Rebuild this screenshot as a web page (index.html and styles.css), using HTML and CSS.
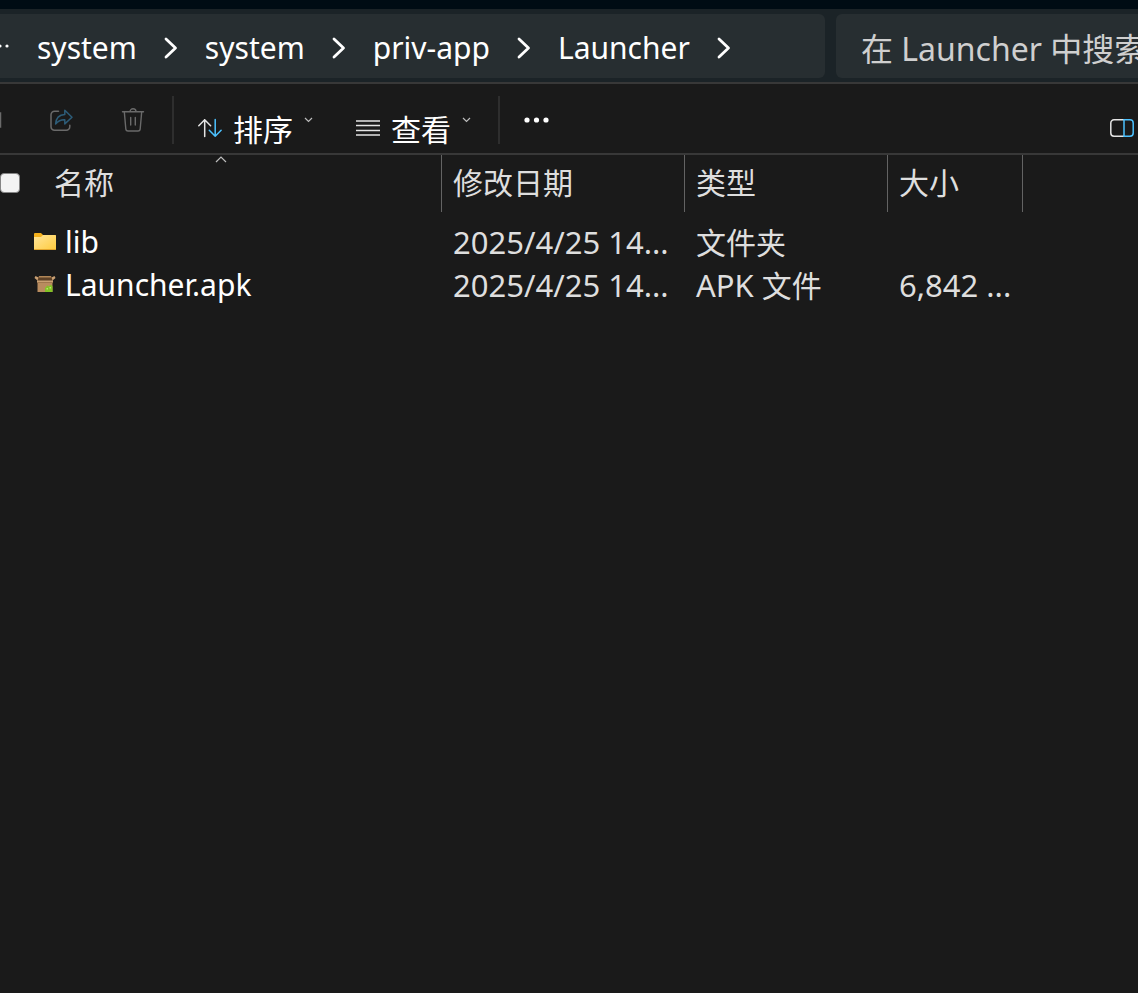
FILE: index.html
```html
<!DOCTYPE html>
<html lang="zh-CN">
<head>
<meta charset="utf-8">
<title>Launcher</title>
<link rel="stylesheet" href="styles.css">
</head>
<body>
<div class="window">
  <header class="address-row">
    <nav class="breadcrumb" aria-label="路径">
      <button class="overflow" aria-label="更多路径"><svg width="10" height="4" viewBox="0 0 10 4" fill="#fff"><circle cx="0" cy="2" r="1.600"/><circle cx="7" cy="2" r="1.600"/></svg></button>
      <a href="#system">system</a>
      <svg class="crumb-arrow" width="14" height="22" viewBox="0 0 14 22"><path d="M2 2l9.500 9L2 20"/></svg>
      <a href="#system2">system</a>
      <svg class="crumb-arrow" width="14" height="22" viewBox="0 0 14 22"><path d="M2 2l9.500 9L2 20"/></svg>
      <a href="#priv-app">priv-app</a>
      <svg class="crumb-arrow" width="14" height="22" viewBox="0 0 14 22"><path d="M2 2l9.500 9L2 20"/></svg>
      <a href="#launcher">Launcher</a>
      <svg class="crumb-arrow" width="14" height="22" viewBox="0 0 14 22"><path d="M2 2l9.500 9L2 20"/></svg>
    </nav>
    <input class="search" type="text" aria-label="搜索" placeholder="在 Launcher 中搜索">
  </header>

  <div class="toolbar">
    <button class="tool edge" aria-label="重命名"><svg width="2" height="16" viewBox="0 0 2 16"><path d="M0 1h.5v14H0" fill="none" stroke="#6a6a6a" stroke-width="1.500"/></svg></button>
    <button class="tool share" aria-label="共享" disabled>
      <svg width="24" height="24" viewBox="0 0 24 24" fill="none" stroke-width="1.500" stroke-linejoin="round" stroke-linecap="round">
        <path stroke="#6a6a6a" d="M9.500 3.200H5.500A3.500 3.500 0 0 0 2 6.700v12A3.500 3.500 0 0 0 5.500 22.200h11.800a3.500 3.500 0 0 0 3.500-3.500v-1.500"/>
        <path stroke="#2d5c78" d="M15.800 2.200l7.200 7-7.200 6.700v-4.100c-4.200-.2-6.600 1.200-9.200 4.200.3-5.700 3.700-9.300 9.200-9.600z"/>
      </svg>
    </button>
    <button class="tool trash" aria-label="删除" disabled>
      <svg width="24" height="24" viewBox="0 0 24 24" fill="none" stroke="#6a6a6a" stroke-width="1.400" stroke-linecap="round" stroke-linejoin="round">
        <path d="M1.500 3.800h21M9 3.800a3 3 0 0 1 6 0M3.300 3.800l1.500 17a2.300 2.300 0 0 0 2.300 2.200h9.800a2.300 2.300 0 0 0 2.300-2.200l1.500-17M9.700 9.500v7.500M14.300 9.500v7.500"/>
      </svg>
    </button>
    <span class="divider"></span>
    <button class="menu sort">
      <svg width="24" height="20" viewBox="0 0 24 20" fill="none" stroke-width="1.500" stroke-linecap="round" stroke-linejoin="round">
        <path stroke="#e4e4e4" d="M6.700 18.500V1.800M.8 7.800l5.900-6 5.900 6"/>
        <path stroke="#4cc2ff" d="M17.200 1.500v16.700M11.300 12.200l5.900 6 5.900-6"/>
      </svg>
      <span class="label">排序</span>
      <svg class="caret" width="9" height="6" viewBox="0 0 9 6"><path d="M1 1l3.500 3.500L8 1"/></svg>
    </button>
    <button class="menu view">
      <svg width="24" height="18" viewBox="0 0 24 18" stroke="#e4e4e4" stroke-width="1.500"><path d="M0 2h24M0 6.500h24M0 11.500h24M0 16h24"/></svg>
      <span class="label">查看</span>
      <svg class="caret" width="9" height="6" viewBox="0 0 9 6"><path d="M1 1l3.500 3.500L8 1"/></svg>
    </button>
    <span class="divider"></span>
    <button class="tool more" aria-label="更多"><svg width="26" height="6" viewBox="0 0 26 6" fill="#fff"><circle cx="3" cy="3" r="2.600"/><circle cx="12.500" cy="3" r="2.600"/><circle cx="22" cy="3" r="2.600"/></svg></button>
    <button class="tool pane" aria-label="详细信息">
      <svg width="24" height="18" viewBox="0 0 24 18" fill="none" stroke-width="1.500">
        <path stroke="#e4e4e4" d="M14 .8H4A3.200 3.200 0 0 0 .8 4v10A3.200 3.200 0 0 0 4 17.200h10"/>
        <path stroke="#4cc2ff" d="M14 .8h6A3.200 3.200 0 0 1 23.200 4v10a3.200 3.200 0 0 1-3.200 3.200h-6z"/>
      </svg>
    </button>
  </div>

  <table class="files">
    <colgroup><col class="c-name"><col class="c-date"><col class="c-type"><col class="c-size"><col></colgroup>
    <thead>
      <tr>
        <th scope="col">
          <div class="name-head">
            <input type="checkbox" class="check" aria-label="全选">
            <span>名称</span>
            <svg class="sorted" width="12" height="7" viewBox="0 0 12 7"><path d="M1 6l5-5 5 5"/></svg>
          </div>
        </th>
        <th scope="col">修改日期</th>
        <th scope="col">类型</th>
        <th scope="col">大小</th>
        <td></td>
      </tr>
    </thead>
    <tbody>
      <tr>
        <td>
          <div class="file">
            <svg width="22" height="20" viewBox="0 0 22 20">
              <defs><linearGradient id="fold" x1="0" y1="0" x2="1" y2="1"><stop offset="0" stop-color="#ffe59a"/><stop offset="1" stop-color="#ffcb3d"/></linearGradient></defs>
              <path fill="#f5b11c" d="M0 2q0-1 1-1h6l2 2h12q1 0 1 1v4H0z"/>
              <path fill="url(#fold)" d="M0 5h7l2-2h12q1 0 1 1v13q0 1-1 1H1q-1 0-1-1z"/>
              <path fill="#e3a52b" d="M0 17h22q0 1-1 1H1q-1 0-1-1z"/>
            </svg>
            <span>lib</span>
          </div>
        </td>
        <td>2025/4/25 14...</td>
        <td><span class="han">文件夹</span></td>
        <td></td>
        <td></td>
      </tr>
      <tr>
        <td>
          <div class="file">
            <svg width="22" height="20" viewBox="0 0 22 20">
              <path fill="#5d4127" d="M4 1.500h14l1 4.500H3z"/>
              <path fill="#b08657" d="M5 1h12v1.500H5z"/>
              <path fill="#c9a073" d="M4.500 2.500L1.500 1 .5 3l3 2.500zM17.500 2.500l3-1.500 1 2-3 2.500zM3 5.500h16v2H3z"/>
              <path fill="#b98c5f" d="M3.500 7h15v10h-15z"/>
              <path fill="#a0774e" d="M3.500 7h15v1h-15z"/>
              <path fill="#83c225" d="M11 13l2.500-2.500 1.500 1 2-2 1.500 2V17H11z"/>
              <path fill="#b9e86c" d="M12.500 13H14v1.500h-1.500zM15.500 12H17v1.500h-1.500z"/>
            </svg>
            <span>Launcher.apk</span>
          </div>
        </td>
        <td>2025/4/25 14...</td>
        <td>APK <span class="han">文件</span></td>
        <td>6,842 ...</td>
        <td></td>
      </tr>
    </tbody>
  </table>
</div>
</body>
</html>
```
FILE: styles.css
```css
* {
  box-sizing: border-box;
}

body {
  margin: 0;
  background: #1a1a1a;
  color: #dedede;
  font-family: "Noto Sans", "Noto Sans CJK SC", sans-serif;
  font-size: 31px;
}

svg {
  display: block;
  flex: none;
}

button {
  display: flex;
  align-items: center;
  padding: 0;
  border: 0;
  background: none;
  color: #fff;
  font: inherit;
}

.window {
  min-height: 100vh;
  overflow: hidden;
  border-top: 9px solid #000c14;
}

.address-row {
  display: grid;
  grid-template-columns: 825fr 302fr;
  gap: 11px;
  padding: 5px 0 4px;
  background: #1b2327;
  border-bottom: 2px solid #383838;
}

.breadcrumb {
  display: flex;
  align-items: center;
  gap: 27px;
  height: 64px;
  min-width: 0;
  padding-top: 4px;
  background: #272e31;
  border-radius: 0 6px 6px 0;
  font-size: 30px;
}

.breadcrumb a {
  color: #fff;
  line-height: 40px;
  text-decoration: none;
  white-space: nowrap;
}

.crumb-arrow {
  fill: none;
  stroke: #fff;
  stroke-width: 2.8;
  stroke-linecap: round;
  stroke-linejoin: round;
}

.overflow {
  padding-bottom: 5px;
}

.search {
  width: 100%;
  min-width: 0;
  height: 64px;
  padding: 4px 0 0 25px;
  border: 0;
  border-radius: 6px 0 0 6px;
  background: #272e31;
  color: #fff;
  font: inherit;
  font-size: 32px;
}

.search::placeholder {
  color: #cfcfcf;
  opacity: 1;
}

.toolbar {
  display: flex;
  align-items: center;
  height: 71px;
  padding: 2px 4px 0 0;
  border-bottom: 2px solid #383838;
  font-size: 30px;
}

.share {
  margin-left: 47px;
}

.trash {
  margin-left: 48px;
}

.divider {
  width: 2px;
  height: 48px;
  margin-left: 27px;
  background: #2e2e2e;
}

.menu {
  gap: 11px;
  padding-top: 16px;
  line-height: 30px;
}

.label {
  padding-top: 4px;
}

.sort {
  margin-left: 24px;
}

.view {
  margin-left: 43px;
}

.caret {
  align-self: flex-start;
  margin-top: 6px;
}

.caret path,
.sorted path {
  fill: none;
  stroke: #bdbdbd;
  stroke-width: 1.2;
}

.more {
  margin-left: 24px;
}

.pane {
  margin-left: auto;
  padding-top: 16px;
}

.files {
  width: 100%;
  table-layout: fixed;
  border-collapse: separate;
  border-spacing: 0;
}

.c-name {
  width: 442px;
}

.c-date {
  width: 243px;
}

.c-type {
  width: 203px;
}

.c-size {
  width: 135px;
}

.files th {
  height: 57px;
  padding: 0 0 0 11px;
  border-right: 1px solid #636363;
  font-size: 30px;
  font-weight: 400;
  line-height: 56px;
  text-align: left;
  vertical-align: top;
}

.files th:first-child {
  padding: 0;
}

.name-head {
  position: relative;
  display: flex;
  align-items: center;
  gap: 34px;
}

.check {
  appearance: none;
  width: 20px;
  height: 20px;
  margin: 0;
  border: 1px solid #858585;
  border-radius: 4px;
  background: #f3f3f3;
}

.sorted {
  position: absolute;
  top: 1px;
  left: 50%;
  transform: translateX(-50%);
}

.files tbody::before {
  content: "";
  display: block;
  height: 9px;
}

.files tbody td {
  height: 42px;
  padding: 0 0 0 11px;
  line-height: 42px;
  white-space: nowrap;
  vertical-align: top;
}

.files tbody td:first-child {
  padding-left: 34px;
}

.file {
  display: flex;
  align-items: center;
  gap: 9px;
  color: #fff;
  font-size: 30px;
}

.han {
  font-size: 30px;
}
```
